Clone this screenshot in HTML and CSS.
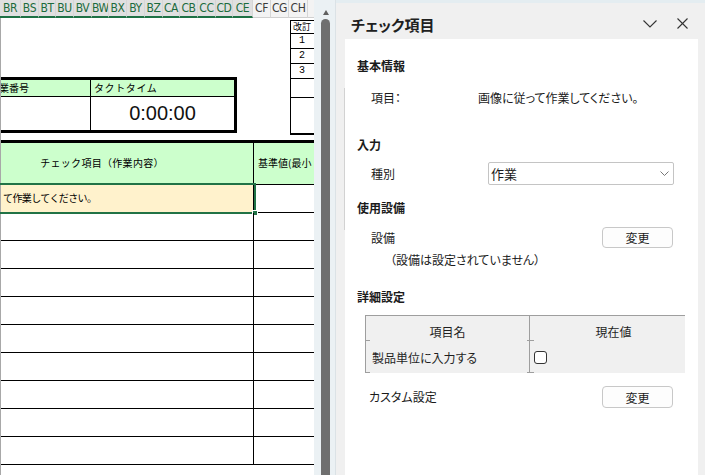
FILE: index.html
```html
<!DOCTYPE html>
<html lang="ja">
<head>
<meta charset="utf-8">
<title>チェック項目</title>
<link rel="stylesheet" href="styles.css">
</head>
<body>
<div class="app">
  <div class="sheet">
    <div class="colhdr">
      <div class="ch sel">BR</div><div class="ch sel">BS</div><div class="ch sel">BT</div><div class="ch sel">BU</div><div class="ch sel">BV</div><div class="ch sel">BW</div><div class="ch sel">BX</div><div class="ch sel">BY</div><div class="ch sel">BZ</div><div class="ch sel">CA</div><div class="ch sel">CB</div><div class="ch sel">CC</div><div class="ch sel">CD</div><div class="ch sel">CE</div><div class="ch">CF</div><div class="ch">CG</div><div class="ch">CH</div><div class="ch last"></div>
    </div>
    <div class="cells">
      <div class="top">
        <div class="takt">
          <div class="takt-hdr">
            <div class="tc c1"><span class="clip">作業番号</span></div>
            <div class="tc c2">タクトタイム</div>
          </div>
          <div class="takt-val">
            <div class="tc c1"></div>
            <div class="tc c2 time">0:00:00</div>
          </div>
        </div>
        <div class="rev">
          <div class="rv hd">改訂</div>
          <div class="rv num">1</div>
          <div class="rv num">2</div>
          <div class="rv num">3</div>
          <div class="rv blank1"></div>
          <div class="rv blank2"></div>
        </div>
      </div>
      <div class="main">
        <div class="mhdr">
          <div class="m1">チェック項目（作業内容）</div>
          <div class="m2">基準値(最小</div>
        </div>
        <div class="mrow active">
          <div class="m1">て作業してください。</div>
          <div class="m2"></div>
          <div class="selbox"><span class="handle"></span></div>
        </div>
        <div class="mrow"><div class="m1"></div><div class="m2"></div></div>
        <div class="mrow"><div class="m1"></div><div class="m2"></div></div>
        <div class="mrow"><div class="m1"></div><div class="m2"></div></div>
        <div class="mrow"><div class="m1"></div><div class="m2"></div></div>
        <div class="mrow"><div class="m1"></div><div class="m2"></div></div>
        <div class="mrow"><div class="m1"></div><div class="m2"></div></div>
        <div class="mrow"><div class="m1"></div><div class="m2"></div></div>
        <div class="mrow"><div class="m1"></div><div class="m2"></div></div>
        <div class="mrow"><div class="m1"></div><div class="m2"></div></div>
        <div class="mrow last"></div>
      </div>
    </div>
  </div>

  <div class="vscroll">
    <div class="arrow"></div>
    <div class="thumb"></div>
  </div>

  <div class="pane">
    <div class="pane-hdr">
      <div class="pane-title">チェック項目</div>
      <div class="pane-icons">
        <svg class="ico-chev" width="14" height="8" viewBox="0 0 14 8"><polyline points="0.5,0.5 7,7 13.5,0.5" fill="none" stroke="#333" stroke-width="1.1"/></svg>
        <svg class="ico-x" width="11" height="11" viewBox="0 0 11 11"><line x1="0.5" y1="0.5" x2="10.5" y2="10.5" stroke="#333" stroke-width="1.1"/><line x1="10.5" y1="0.5" x2="0.5" y2="10.5" stroke="#333" stroke-width="1.1"/></svg>
      </div>
    </div>
    <div class="card">
      <div class="sec first">基本情報</div>
      <div class="row r-item">
        <div class="lbl w-item">項目：</div>
        <div class="val">画像に従って作業してください。</div>
      </div>

      <div class="sec s-input">入力</div>
      <div class="row r-kind">
        <div class="lbl w-kind">種別</div>
        <div class="select">
          <span>作業</span>
          <svg width="9" height="5" viewBox="0 0 9 5"><polyline points="0.5,0.5 4.5,4.5 8.5,0.5" fill="none" stroke="#777" stroke-width="1"/></svg>
        </div>
      </div>

      <div class="sec s-equip">使用設備</div>
      <div class="row r-equip">
        <div class="lbl w-equip">設備</div>
        <div class="btn">変更</div>
      </div>
      <div class="note">（設備は設定されていません）</div>

      <div class="sec s-detail">詳細設定</div>
      <div class="gridwrap">
        <div class="grid">
          <div class="gc gh g1">項目名</div>
          <div class="gc gh g2">現在値</div>
          <div class="gc gr g1 left">製品単位に入力する</div>
          <div class="gc gr g2 left"><span class="chk"></span></div>
        </div>
      </div>

      <div class="row r-custom">
        <div class="lbl w-custom">カスタム設定</div>
        <div class="btn">変更</div>
      </div>
    </div>
  </div>
</div>
</body>
</html>
```

FILE: styles.css
```css
* {
  box-sizing: border-box;
  margin: 0;
  padding: 0;
}

html,
body {
  width: 705px;
  height: 475px;
  overflow: hidden;
  background: #f0f0f0;
}

body {
  font-family: "Noto Sans CJK JP", "Noto Sans", sans-serif;
  color: #1b1b1b;
}

.app {
  display: flex;
  height: 475px;
}

/* ---------- spreadsheet ---------- */
.sheet {
  width: 314px;
  flex: none;
  overflow: hidden;
  background: #fff;
  display: flex;
  flex-direction: column;
}

.colhdr {
  display: grid;
  grid-template-columns: 21px 18px 17px 18px 18px 17px 18px 18px 18px 17px 18px 18px 17px 20px 18px 18px 19px 12px;
  height: 18px;
  flex: none;
  background: #f4f4f4;
}

.ch {
  font-family: "DejaVu Sans", "Liberation Sans", sans-serif;
  font-stretch: condensed;
  font-size: 12px;
  line-height: 17px;
  letter-spacing: -0.4px;
  text-align: center;
  background: #f3f3f3;
  color: #3c3c3c;
  border-right: 1px solid #d6d6d6;
  border-bottom: 1px solid #d0d0d0;
  overflow: hidden;
  white-space: nowrap;
}

.ch.sel {
  background: #e0e0e0;
  color: #1c6b3c;
  line-height: 16px;
  border-bottom: 2px solid #1e7145;
}

.ch.last {
  border-right: none;
}

.cells {
  flex: 1;
  border-left: 1px solid #a8a8a8;
  font-size: 10px;
  color: #000;
}

.top {
  display: flex;
  align-items: flex-start;
  height: 122px;
}

.takt {
  margin-top: 59px;
  width: 236px;
  flex: none;
  border: 3px solid #000;
  border-left: none;
}

.takt-hdr {
  display: flex;
  height: 17px;
  background: #ccffcc;
  border-bottom: 1px solid #000;
}

.takt-val {
  display: flex;
  height: 33px;
}

.tc {
  line-height: 16px;
  white-space: nowrap;
}

.c1 {
  width: 90px;
  flex: none;
  border-right: 1px solid #000;
  overflow: hidden;
}

.c2 {
  flex: 1;
  padding-left: 3px;
  letter-spacing: 0.6px;
}

.clip {
  display: inline-block;
  margin-left: -12px;
}

.time {
  font: 20px/33px "Liberation Sans", "DejaVu Sans", sans-serif;
  text-align: center;
  letter-spacing: 0;
  padding-left: 0;
  color: #111;
}

.rev {
  margin-left: 53px;
  margin-top: 2px;
  width: 40px;
  flex: none;
  border: 1px solid #000;
  border-right: none;
}

.rv {
  border-bottom: 1px solid #000;
  height: 15px;
  line-height: 14px;
  font-size: 10px;
}

.rv:last-child {
  border-bottom: none;
}

.rv.hd {
  height: 13px;
  line-height: 12px;
  padding-left: 2px;
  font-size: 9px;
}

.rv.num {
  padding-left: 8px;
  font-family: "Liberation Mono", monospace;
}

.rv.blank1 {
  height: 19px;
}

.rv.blank2 {
  height: 36px;
  border-bottom: 1px solid #000;
}

.main {
  border-top: 3px solid #000;
}

.mhdr {
  display: flex;
  height: 42px;
  background: #ccffcc;
  border-bottom: 1px solid #000;
}

.mhdr .m1 {
  line-height: 40px;
  text-align: center;
  padding-right: 50px;
  letter-spacing: 0.3px;
}

.mhdr .m2 {
  line-height: 40px;
  padding-left: 4px;
  white-space: nowrap;
  overflow: hidden;
}

.m1 {
  width: 253px;
  flex: none;
  border-right: 1px solid #000;
}

.m2 {
  flex: 1;
}

.mrow {
  display: flex;
  height: 28px;
  border-bottom: 1px solid #000;
  position: relative;
}

.mrow.last {
  border-bottom: none;
}

.mrow.active .m1 {
  background: #fff2cc;
  line-height: 25px;
  padding-left: 2px;
  letter-spacing: -0.6px;
}

.selbox {
  position: absolute;
  left: -3px;
  top: -2px;
  width: 258px;
  height: 31px;
  border: 2px solid #217346;
}

.handle {
  position: absolute;
  right: -4px;
  bottom: -4px;
  width: 6px;
  height: 6px;
  background: #217346;
  border: 1px solid #fff;
}

/* ---------- vertical scrollbar ---------- */
.vscroll {
  width: 22px;
  flex: none;
  background: #ebf1f4;
  border-right: 1px solid #dbe2e6;
  display: flex;
  flex-direction: column;
  padding-top: 10px;
}

.arrow {
  width: 0;
  height: 0;
  margin-left: 9px;
  border-left: 3.5px solid transparent;
  border-right: 3.5px solid transparent;
  border-bottom: 5px solid #5f5f5f;
}

.thumb {
  margin-top: 4px;
  margin-left: 7px;
  width: 9px;
  flex: 1;
  background: #6f6f6f;
  border-radius: 5px 5px 0 0;
}

/* ---------- task pane ---------- */
.pane {
  flex: 1;
  display: flex;
  flex-direction: column;
  background: #f0f0f0;
  border-top: 3px solid #e4edf1;
  position: relative;
}

.pane::before {
  content: "";
  position: absolute;
  left: 8px;
  top: 85px;
  width: 1px;
  height: 142px;
  background: #d2d2d2;
}

.pane-hdr {
  height: 36px;
  flex: none;
  display: flex;
  align-items: flex-start;
  padding: 12px 17px 0 15px;
}

.pane-title {
  font-size: 15px;
  line-height: 20px;
  font-weight: 700;
  font-feature-settings: "palt";
  color: #202020;
}

.pane-icons {
  margin-left: auto;
  display: flex;
  align-items: center;
  gap: 20px;
  padding-top: 3px;
}

.ico-chev {
  margin-top: 1px;
}

.card {
  flex: 1;
  margin: 0 7px 0 9px;
  background: #fff;
  padding: 17px 0 0 12px;
  overflow: hidden;
  font-size: 12px;
  font-feature-settings: "palt";
}

.sec {
  font-weight: 700;
  font-size: 12px;
  line-height: 20px;
  color: #1b1b1b;
}

.row {
  display: flex;
  align-items: center;
}

.lbl {
  margin-left: 14px;
  line-height: 20px;
  flex: none;
}

.w-item { width: 107px; }
.w-kind { width: 117px; }
.w-equip { width: 231px; }
.w-custom { width: 233px; margin-left: 12px; }

.val {
  line-height: 20px;
}

.r-item { margin-top: 12px; }
.s-input { margin-top: 27px; }
.r-kind { margin-top: 7px; height: 23px; }
.s-equip { margin-top: 13px; }
.r-equip { margin-top: 9px; height: 21px; }
.note { margin-top: 2px; margin-left: 33px; line-height: 20px; }
.s-detail { margin-top: 17px; }
.r-custom { margin-top: 13px; height: 22px; }

.select {
  width: 186px;
  height: 23px;
  border: 1px solid #c4c4c4;
  border-radius: 2px;
  display: flex;
  align-items: center;
  justify-content: space-between;
  padding: 0 4px 0 2px;
  font-size: 13px;
  background: #fff;
}

.btn {
  width: 71px;
  height: 100%;
  border: 1px solid #c8c8c8;
  border-radius: 4px;
  background: #fdfdfd;
  display: flex;
  align-items: center;
  justify-content: center;
  font-size: 12px;
}

.gridwrap {
  margin-top: 8px;
  margin-left: 8px;
  width: 320px;
  overflow: hidden;
}

.grid {
  width: 332px;
  display: grid;
  grid-template-columns: 164px 168px;
  grid-template-rows: 25px 32px;
  background: #f0f0f0;
  border-top: 1px solid #9e9e9e;
}

.gc {
  position: relative;
  border-left: 1px solid #9e9e9e;
  display: flex;
  align-items: center;
  justify-content: center;
  color: #1f1f1f;
}

.gc.gh {
  padding-top: 6px;
}

.gc::after {
  content: "";
  position: absolute;
  left: -1px;
  bottom: 0;
  width: 5px;
  height: 1px;
  background: #9e9e9e;
}

.gc.g2::after {
  left: -3px;
  width: 7px;
}

.gc.left {
  justify-content: flex-start;
}

.gr.g1 {
  padding-left: 6px;
}

.gr.g2 {
  padding-left: 4px;
}

.chk {
  width: 13px;
  height: 13px;
  border: 1px solid #333;
  border-radius: 3px;
  background: #fff;
}
```
